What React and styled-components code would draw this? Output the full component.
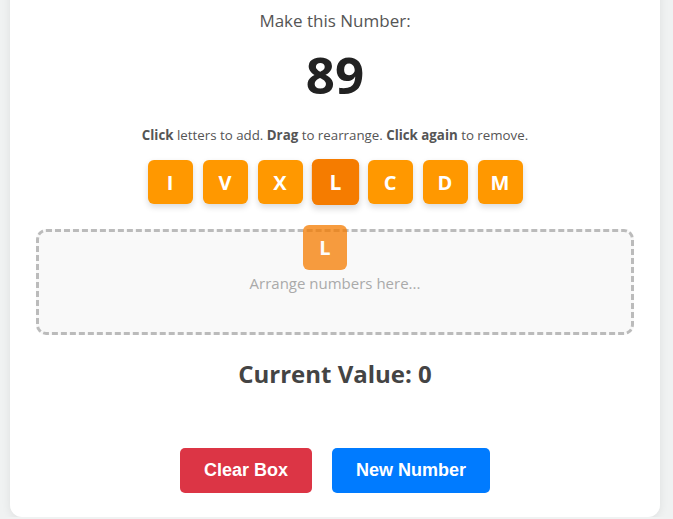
import React from 'react';
import styled, { createGlobalStyle } from 'styled-components';

const GlobalStyle = createGlobalStyle`
  html, body {
    margin: 0;
    padding: 0;
    background: #f0f2f2;
    font-family: "Open Sans", "Noto Sans", sans-serif;
    overflow: hidden;
  }
`;

const Page = styled.div`
  padding: 0 13px 0 10px;
`;

const Card = styled.div`
  margin-top: -20px;
  background: #fff;
  border-radius: 12px;
  box-shadow: 0 2px 10px rgba(0, 0, 0, 0.08);
  padding: 29px 26px 24px;
  display: flex;
  flex-direction: column;
  align-items: center;
  position: relative;
`;

const Prompt = styled.div`
  font-size: 17px;
  line-height: 24px;
  color: #555;
`;

const Target = styled.div`
  margin-top: 10px;
  font-size: 51px;
  line-height: 62px;
  font-weight: 700;
  color: #222;
`;

const Hint = styled.p`
  margin: 21px 0 0;
  font-size: 13.3px;
  line-height: 18px;
  color: #555;

  b {
    font-weight: 700;
  }
`;

const TileRow = styled.div`
  margin-top: 16px;
  display: flex;
  gap: 10px;
`;

const Tile = styled.div`
  width: 45px;
  height: 44px;
  border-radius: 6px;
  background: ${p => (p.$active ? '#f57c00' : '#ff9800')};
  color: #fff;
  font-size: 20px;
  font-weight: 700;
  display: flex;
  align-items: center;
  justify-content: center;
  box-shadow: 0 3px 6px rgba(0, 0, 0, 0.15);
  transform: ${p => (p.$active ? 'scale(1.05)' : 'none')};
`;

const DropZone = styled.div`
  margin-top: 25px;
  align-self: stretch;
  height: 100px;
  border: 3px dashed #bbb;
  border-radius: 10px;
  background: #f9f9f9;
  display: flex;
  align-items: center;
  justify-content: center;
`;

const Placeholder = styled.span`
  font-size: 15px;
  color: #aaa;
  margin-top: 2px;
`;

/* drag preview of the tile being moved */
const Ghost = styled(Tile)`
  position: absolute;
  left: 293px;
  top: 245px;
  width: 44px;
  height: 45px;
  background: #f57c00;
  opacity: 0.75;
  box-shadow: none;
  transform: none;
`;

const Current = styled.div`
  margin-top: 24px;
  font-size: 24px;
  line-height: 30px;
  font-weight: 700;
  color: #444;
`;

const Actions = styled.div`
  margin-top: 59px;
  display: flex;
  gap: 20px;
`;

const Button = styled.button`
  height: 45px;
  padding: 0 24px;
  border: none;
  border-radius: 5px;
  background: ${p => (p.$variant === 'danger' ? '#dc3545' : '#007bff')};
  color: #fff;
  font-family: "Liberation Sans", Arial, sans-serif;
  font-size: 18px;
  font-weight: 700;
  cursor: pointer;
`;

const letters = ['I', 'V', 'X', 'L', 'C', 'D', 'M'];

export default function App() {
  return (
    <Page>
      <GlobalStyle />
      <Card>
        <Prompt>Make this Number:</Prompt>
        <Target>89</Target>
        <Hint>
          <b>Click</b> letters to add. <b>Drag</b> to rearrange. <b>Click again</b> to remove.
        </Hint>
        <TileRow>
          {letters.map(l => (
            <Tile key={l} $active={l === 'L'}>{l}</Tile>
          ))}
        </TileRow>
        <DropZone>
          <Placeholder>Arrange numbers here...</Placeholder>
        </DropZone>
        <Ghost>L</Ghost>
        <Current>Current Value: 0</Current>
        <Actions>
          <Button $variant="danger">Clear Box</Button>
          <Button>New Number</Button>
        </Actions>
      </Card>
    </Page>
  );
}
